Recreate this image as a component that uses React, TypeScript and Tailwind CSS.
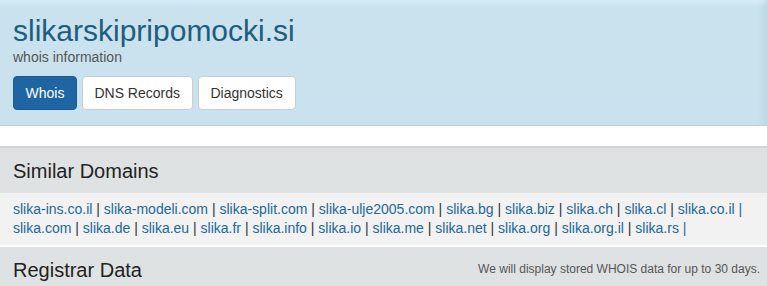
import React from "react";

const LINE1 = ["slika-ins.co.il", "slika-modeli.com", "slika-split.com", "slika-ulje2005.com", "slika.bg", "slika.biz", "slika.ch", "slika.cl", "slika.co.il"];
const LINE2 = ["slika.com", "slika.de", "slika.eu", "slika.fr", "slika.info", "slika.io", "slika.me", "slika.net", "slika.org", "slika.org.il", "slika.rs"];

function DomainLine({ items }: { items: string[] }) {
  return (
    <div>
      {items.map((d, i) => (
        <React.Fragment key={d}>
          <a href="#" className="text-[#23689b]">{d}</a>
          {i < items.length - 1 ? <span className="text-[#333]"> | </span> : <span className="text-[#23689b]"> |</span>}
        </React.Fragment>
      ))}
    </div>
  );
}

export default function App() {
  return (
    <div className="w-[767px] h-[286px] overflow-hidden bg-white font-['Liberation_Sans',Arial,sans-serif] text-[#333]">
      <header className="h-[126px] border-b border-[#acd6e6] bg-gradient-to-b from-[#d8edf8] from-0% to-[#c9e2ee] to-[6%] px-[13px] pt-[13px] shadow-[inset_-8px_0_8px_-6px_rgba(0,0,0,0.08)]">
        <h1 className="text-[30px] leading-[36px] text-[#1d5d80]">slikarskipripomocki.si</h1>
        <p className="text-[14px] leading-[17px] text-[#555]">whois information</p>
        <div className="mt-[10px] flex gap-[5px] text-[14px]">
          <button className="h-[34px] rounded-[4px] border border-[#1d5a8f] bg-[#2065a3] px-[11.5px] text-white">Whois</button>
          <button className="h-[34px] rounded-[4px] border border-[#ccc] bg-white px-[11.5px] text-[#333]">DNS Records</button>
          <button className="h-[34px] rounded-[4px] border border-[#ccc] bg-white px-[12px] text-[#333]">Diagnostics</button>
        </div>
      </header>
      <div className="h-[20px]" />
      <section className="border-t-2 border-[#d4d4d4] shadow-[inset_-8px_0_8px_-6px_rgba(0,0,0,0.08)]">
        <div className="h-[45px] bg-[#dfe2e3] px-[13px] pt-[11px] text-[20px] leading-[24px] text-[#222]">Similar Domains</div>
        <div className="h-[52px] bg-[#f2f2f2] px-[13px] pt-[7px] text-[14px] leading-[19px]">
          <DomainLine items={LINE1} />
          <DomainLine items={LINE2} />
        </div>
        <div className="h-[2px] bg-white" />
        <div className="flex h-[45px] items-start justify-between bg-[#dfe2e3] px-[13px] pt-[11px]">
          <span className="text-[20px] leading-[24px] text-[#222]">Registrar Data</span>
          <span className="pt-[3px] text-[12px] leading-[16px] text-[#555] mr-[-6px]">We will display stored WHOIS data for up to 30 days.</span>
        </div>
      </section>
    </div>
  );
}
